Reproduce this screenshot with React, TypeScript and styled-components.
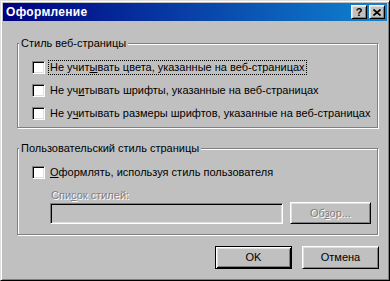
import type { ReactNode } from 'react';
import styled, { createGlobalStyle } from 'styled-components';

const GlobalStyle = createGlobalStyle`
  html, body {
    margin: 0;
    padding: 0;
    background: #c0c0c0;
  }
  body {
    font: 11px/13px 'Liberation Sans', Arial, sans-serif;
    color: #000;
  }
`;

const Window = styled.div`
  box-sizing: border-box;
  width: 390px;
  height: 281px;
  display: flex;
  flex-direction: column;
  padding: 2px;
  background: #c0c0c0;
  border: 1px solid;
  border-color: #dfdfdf #000 #000 #dfdfdf;
  box-shadow: inset 1px 1px #fff, inset -1px -1px #808080;
`;

const TitleBar = styled.div`
  height: 18px;
  display: flex;
  align-items: center;
  padding: 0 2px 0 3px;
  background: linear-gradient(90deg, #000080, #1084d0);
  color: #fff;
  font-weight: bold;
  font-size: 12px;
`;

const Title = styled.span`
  flex: 1;
  letter-spacing: 0.3px;
`;

const TitleButton = styled.button<{ $gap?: number }>`
  box-sizing: border-box;
  width: 16px;
  height: 14px;
  margin-left: ${(p) => p.$gap ?? 0}px;
  padding: 0;
  display: grid;
  place-content: center;
  background: #c0c0c0;
  border: 1px solid;
  border-color: #fff #000 #000 #fff;
  box-shadow: inset 1px 1px #dfdfdf, inset -1px -1px #808080;
  font: bold 11px/11px 'Liberation Sans', Arial, sans-serif;
  color: #000;
`;

const Body = styled.div`
  display: flex;
  flex-direction: column;
  padding: 22px 0 0 14px;
`;

const Group = styled.div<{ $after?: number; $bottom?: number }>`
  box-sizing: border-box;
  width: 361px;
  margin-bottom: ${(p) => p.$after ?? 0}px;
  display: flex;
  flex-direction: column;
  align-items: flex-start;
  padding: 0 0 ${(p) => p.$bottom ?? 2}px 14px;
  border: 1px solid #808080;
  box-shadow: inset 1px 1px #fff, 1px 1px #fff;
`;

const Legend = styled.span`
  margin: -7px 0 6px -13px;
  padding: 0 2px;
  background: #c0c0c0;
  line-height: 13px;
`;

const Row = styled.div`
  height: 23px;
  display: flex;
  align-items: center;
  gap: 3px;
`;

const Box = styled.span`
  box-sizing: border-box;
  width: 13px;
  height: 13px;
  background: #fff;
  border: 1px solid;
  border-color: #808080 #fff #fff #808080;
  box-shadow: inset 1px 1px #000, inset -1px -1px #dfdfdf;
`;

const Label = styled.span<{ $focused?: boolean }>`
  padding: 0 1px;
  border: 1px ${(p) => (p.$focused ? 'dotted #000' : 'solid transparent')};
  white-space: nowrap;
`;

const Disabled = styled.span`
  color: #808080;
  text-shadow: 1px 1px 0 #fff;
`;

const ListLabel = styled.div`
  margin: 5px 0 0 19px;
`;

const InputRow = styled.div`
  display: flex;
  align-items: flex-end;
  gap: 7px;
  margin-left: 18px;
`;

const TextBox = styled.div`
  box-sizing: border-box;
  width: 233px;
  height: 21px;
  background: #c0c0c0;
  border: 1px solid;
  border-color: #808080 #fff #fff #808080;
  box-shadow: inset 1px 1px #000, inset -1px -1px #dfdfdf;
`;

const Button = styled.button<{ $w: number; $h: number; $default?: boolean }>`
  box-sizing: border-box;
  width: ${(p) => p.$w}px;
  height: ${(p) => p.$h}px;
  padding: 0;
  background: #c0c0c0;
  font: 11px/13px 'Liberation Sans', Arial, sans-serif;
  color: #000;
  border: 1px solid;
  border-color: ${(p) => (p.$default ? '#000' : '#fff #000 #000 #fff')};
  box-shadow: ${(p) =>
    p.$default
      ? 'inset 1px 1px #fff, inset -1px -1px #000, inset 2px 2px #dfdfdf, inset -2px -2px #808080'
      : 'inset 1px 1px #dfdfdf, inset -1px -1px #808080'};
`;

const Footer = styled.div`
  width: 362px;
  display: flex;
  justify-content: flex-end;
  gap: 10px;
  margin-top: 11px;
`;

const Check = ({ children, focused }: { children: ReactNode; focused?: boolean }) => (
  <Row>
    <Box />
    <Label $focused={focused}>{children}</Label>
  </Row>
);

export default function App() {
  return (
    <>
      <GlobalStyle />
      <Window>
        <TitleBar>
          <Title>Оформление</Title>
          <TitleButton>?</TitleButton>
          <TitleButton $gap={2}>
            <svg width="8" height="7" viewBox="0 0 8 7">
              <path d="M0.5 0.5L7.5 6.5M7.5 0.5L0.5 6.5" stroke="#000" strokeWidth="1.6" />
            </svg>
          </TitleButton>
        </TitleBar>
        <Body>
          <Group $after={20}>
            <Legend>Стиль веб-страницы</Legend>
            <Check focused>
              Не учит<u>ы</u>вать цвета, указанные на веб-страницах
            </Check>
            <Check>
              Не уч<u>и</u>тывать шрифты, указанные на веб-страницах
            </Check>
            <Check>
              Не у<u>ч</u>итывать размеры шрифтов, указанные на веб-страницах
            </Check>
          </Group>
          <Group $bottom={10}>
            <Legend>Пользовательский стиль страницы</Legend>
            <Check>
              <u>О</u>формлять, используя стиль пользователя
            </Check>
            <ListLabel>
              <Disabled>
                Спи<u>с</u>ок стилей:
              </Disabled>
            </ListLabel>
            <InputRow>
              <TextBox />
              <Button $w={81} $h={22}>
                <Disabled>
                  Об<u>з</u>ор...
                </Disabled>
              </Button>
            </InputRow>
          </Group>
          <Footer>
            <Button $w={77} $h={23} $default>
              OK
            </Button>
            <Button $w={77} $h={23}>
              Отмена
            </Button>
          </Footer>
        </Body>
      </Window>
    </>
  );
}
